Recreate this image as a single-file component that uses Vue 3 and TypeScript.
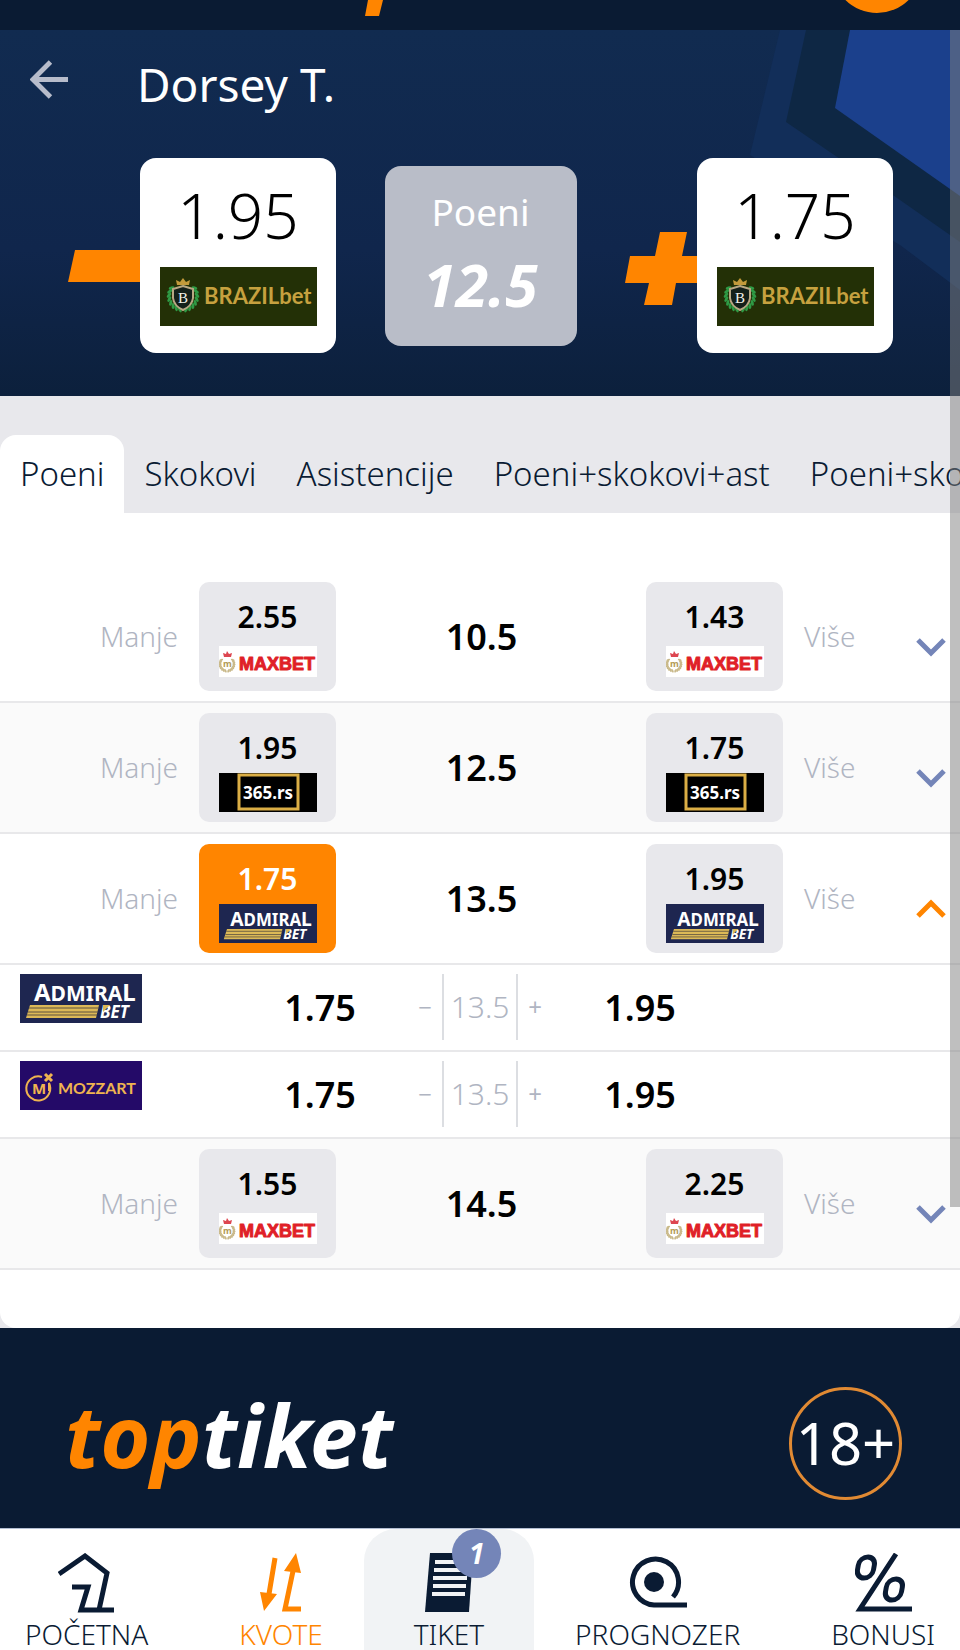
<script setup lang="ts">
import { h, ref } from 'vue'
import type { FunctionalComponent } from 'vue'

type Brand = 'brazilbet' | 'maxbet' | '365' | 'admiral' | 'mozzart'

interface Offer {
  brand: Brand
  under: string
  over: string
}

interface Line {
  value: string
  under: string
  over: string
  brand: Brand
  picked?: 'under' | 'over'
  offers: Offer[]
}

const family = "'Noto Sans', sans-serif"

const label = (x: number, y: number, size: number, fill: string, text: string, extra = {}) =>
  h('text', { x, y, fill, 'font-size': size, 'font-family': family, 'font-weight': 700, ...extra }, text)

function laurel(cx: number, cy: number, rx: number, ry: number, fill: string, leaf: number) {
  const leaves = []
  for (const side of [-1, 1]) {
    for (let i = 0; i < 8; i++) {
      const a = ((-35 + i * 16) * Math.PI) / 180
      const x = cx + side * Math.cos(a) * rx
      const y = cy + Math.sin(a) * ry
      leaves.push(
        h('ellipse', {
          cx: x, cy: y, rx: leaf, ry: leaf / 2, fill,
          transform: `rotate(${side * (20 + i * 14)} ${x} ${y})`,
        }),
      )
    }
  }
  return leaves
}

const BrandLogo: FunctionalComponent<{ brand: Brand }> = ({ brand }) => {
  const svg = (w: number, hh: number, name: string, children: ReturnType<typeof h>[]) =>
    h('svg', { viewBox: `0 0 ${w} ${hh}`, role: 'img', 'aria-label': name }, children)

  if (brand === 'brazilbet') {
    return svg(157, 59, 'BRAZILbet', [
      h('rect', { width: 157, height: 59, fill: '#233006' }),
      ...laurel(23, 29, 14, 14, '#2f9a45', 3),
      h('path', { d: 'M23 19 L33 22 V31 Q32 39 23 43 Q14 39 13 31 V22 Z', fill: '#14201a', stroke: '#b9a884', 'stroke-width': 2 }),
      h('path', { d: 'M17 18 L16 13 L20 15 L23 11 L26 15 L30 13 L29 18 Z', fill: '#c39a3b' }),
      h('text', { x: 18, y: 36, fill: '#f2f2ea', 'font-size': 15, 'font-family': "'Liberation Serif', serif" }, 'B'),
      label(44, 37, 22, '#c6a13f', 'BRAZILbet', { 'font-family': 'Lato, sans-serif', 'font-weight': 700 }),
    ])
  }
  if (brand === 'maxbet') {
    return svg(98, 31, 'MaxBet', [
      h('rect', { width: 98, height: 31, fill: '#fff' }),
      ...laurel(8, 18, 7, 7, '#c9b98a', 2),
      h('path', { d: 'M5 11 L4 7 L7 8 L8 5 L10 8 L13 7 L12 11 Z', fill: '#dd4650' }),
      label(4, 21, 9, '#b39b55', 'm'),
      label(20, 24, 18, '#e01f28', 'MAXBET', {
        'font-family': "'Liberation Sans', sans-serif",
        stroke: '#e01f28', 'stroke-width': 1, 'stroke-linejoin': 'round',
      }),
    ])
  }
  if (brand === '365') {
    return svg(98, 39, '365.rs', [
      h('rect', { width: 98, height: 39, fill: '#000' }),
      h('rect', { x: 20, y: 2, width: 59, height: 34, fill: 'none', stroke: '#dbae45', 'stroke-width': 3 }),
      label(49, 26, 17, '#fff', '365.rs', { 'text-anchor': 'middle' }),
    ])
  }
  if (brand === 'admiral') {
    return svg(122, 49, 'Admiral Bet', [
      h('rect', { width: 122, height: 49, fill: '#1e2650' }),
      h('text', { x: 14, y: 27, fill: '#fff', 'font-family': family, 'font-weight': 700, 'font-size': 21 }, [
        h('tspan', { 'font-size': 24 }, 'A'),
        'DMIRA',
        h('tspan', { 'font-size': 24 }, 'L'),
      ]),
      h('path', { d: 'M10 31 H79 L76 44 H6 Z', fill: '#dcb957' }),
      h('path', { d: 'M9 34 H79 M8 38 H78 M7 41 H77', stroke: '#5d5040', 'stroke-width': 1 }),
      label(80, 44, 17, '#fff', 'BET', { 'font-style': 'italic' }),
      h('path', { d: 'M83 31 L90 31 L83 38 Z', fill: '#dcb957' }),
    ])
  }
  return svg(122, 49, 'Mozzart', [
    h('rect', { width: 122, height: 49, fill: '#240a68' }),
    h('path', { d: 'M22 16 A12 12 0 1 0 29 22 V30', fill: 'none', stroke: '#efb450', 'stroke-width': 2 }),
    h('path', { d: 'M25 13 L32 20 M32 13 L25 20', stroke: '#efb450', 'stroke-width': 3 }),
    label(12, 33, 15, '#efb450', 'M'),
    label(38, 33, 16, '#efb450', 'MOZZART', { 'font-family': 'Lato, sans-serif' }),
  ])
}
BrandLogo.props = ['brand']

const tabs = ['Poeni', 'Skokovi', 'Asistencije', 'Poeni+skokovi+ast', 'Poeni+skokovi']
const activeTab = ref(0)

const lines: Line[] = [
  { value: '10.5', under: '2.55', over: '1.43', brand: 'maxbet', offers: [] },
  { value: '12.5', under: '1.95', over: '1.75', brand: '365', offers: [] },
  {
    value: '13.5', under: '1.75', over: '1.95', brand: 'admiral', picked: 'under',
    offers: [
      { brand: 'admiral', under: '1.75', over: '1.95' },
      { brand: 'mozzart', under: '1.75', over: '1.95' },
    ],
  },
  { value: '14.5', under: '1.55', over: '2.25', brand: 'maxbet', offers: [] },
]
const open = ref<string | null>('13.5')
const toggle = (value: string) => {
  open.value = open.value === value ? null : value
}
</script>

<template>
  <div class="page">
    <header class="topbar">
      <svg class="topbar-art" viewBox="0 0 960 30" aria-hidden="true">
        <path d="M368 0 H383 L379 16 H365 Z" fill="#ff8500" />
        <circle cx="877" cy="-32" r="45" fill="#ff8500" />
      </svg>
    </header>

    <section class="hero">
      <svg class="hero-art" viewBox="0 0 210 366" aria-hidden="true">
        <path d="M30 0 H210 V260 L150 215 L0 125 Z" fill="#122e59" />
        <path d="M56 0 H210 V212 L150 170 L36 92 Z" fill="#0e2744" />
        <path d="M100 0 H210 V166 L85 78 Z" fill="#1b408c" />
      </svg>
      <div class="title-row">
        <button class="back" type="button" aria-label="Nazad">
          <svg viewBox="0 0 40 40"><path d="M39 20 H3 M21 2 L3 20 L21 38" fill="none" stroke="#b7bccb" stroke-width="5" /></svg>
        </button>
        <h1>Dorsey T.</h1>
      </div>
      <div class="best">
        <div class="best-side">
          <svg class="sign" viewBox="0 0 72 74" aria-hidden="true"><path d="M7 18 H72 V50 H0 Z" fill="#ff8500" /></svg>
          <button class="best-card" type="button"><span>1.95</span><BrandLogo brand="brazilbet" /></button>
        </div>
        <div class="best-mid"><span>Poeni</span><strong>12.5</strong></div>
        <div class="best-side">
          <svg class="sign" viewBox="0 0 72 74" aria-hidden="true"><path d="M35 0 H62 L57 24 H72 V51 H51 L47 73 H19 L24 51 H0 L5 24 H30 Z" fill="#ff8500" /></svg>
          <button class="best-card" type="button"><span>1.75</span><BrandLogo brand="brazilbet" /></button>
        </div>
      </div>
    </section>

    <nav class="tabs" aria-label="Tržišta">
      <button
        v-for="(tab, i) in tabs" :key="tab" type="button"
        :class="['tab', { active: i === activeTab }]" @click="activeTab = i"
      >{{ tab }}</button>
    </nav>

    <main class="sheet">
      <div class="panel">
        <template v-for="(line, i) in lines" :key="line.value">
          <div :class="['line', { alt: i % 2 === 1 }]">
            <div class="side under">
              <span class="hint">Manje</span>
              <button type="button" :class="['odd', { picked: line.picked === 'under' }]">
                <span>{{ line.under }}</span>
                <span class="odd-logo"><BrandLogo :brand="line.brand" /></span>
              </button>
            </div>
            <strong class="value">{{ line.value }}</strong>
            <div class="side over">
              <button type="button" :class="['odd', { picked: line.picked === 'over' }]">
                <span>{{ line.over }}</span>
                <span class="odd-logo"><BrandLogo :brand="line.brand" /></span>
              </button>
              <span class="hint">Više</span>
              <button
                type="button" class="expand" :aria-expanded="open === line.value"
                aria-label="Sve kvote" @click="toggle(line.value)"
              >
                <svg viewBox="0 0 30 20">
                  <path v-if="open === line.value" d="M2 17 L15 4 L28 17" fill="none" stroke="#ff8500" stroke-width="5" />
                  <path v-else d="M2 3 L15 16 L28 3" fill="none" stroke="#7485b8" stroke-width="5" />
                </svg>
              </button>
            </div>
          </div>
          <template v-if="open === line.value">
            <div v-for="offer in line.offers" :key="offer.brand" class="offer">
              <span class="offer-logo"><BrandLogo :brand="offer.brand" /></span>
              <strong class="value">{{ offer.under }}</strong>
              <div class="stepper">
                <button type="button">−</button>
                <span>{{ line.value }}</span>
                <button type="button">+</button>
              </div>
              <strong class="value">{{ offer.over }}</strong>
            </div>
          </template>
        </template>
      </div>
    </main>

    <footer class="footer">
      <a class="logo" href="#"><span>top</span>tiket</a>
      <span class="age">18+</span>
    </footer>

    <nav class="bottom" aria-label="Glavni meni">
      <a class="item" href="#">
        <svg width="57" height="60" viewBox="0 0 57 60"><path d="M1 21 L27 3 L49 20 L41 57 M14 34 H30 L23 57 H56" fill="none" stroke="#0a1b33" stroke-width="5" /></svg>
        POČETNA
      </a>
      <a class="item current" href="#">
        <svg width="42" height="60" viewBox="0 0 42 60">
          <path d="M15 5 L9 41 M33 18 L25 56 H41" fill="none" stroke="#ff8500" stroke-width="5" />
          <path d="M0 39 L17 41 L4 58 Z M36 0 L41 20 L24 18 Z" fill="#ff8500" />
        </svg>
        KVOTE
      </a>
      <a class="item ticket" href="#">
        <svg width="48" height="60" viewBox="0 0 48 60">
          <path d="M5 0 H48 L44 59 H0 Z" fill="#0a1b33" />
          <path d="M10 9 H43 M9 17 H42 M8 25 H42 M8 33 H41 M7 41 H40" stroke="#f1f3f5" stroke-width="4" />
        </svg>
        TIKET
        <span class="badge">1</span>
      </a>
      <a class="item" href="#">
        <svg width="59" height="60" viewBox="0 0 59 60">
          <path d="M45 44 A23 23 0 1 0 26 52 H59" fill="none" stroke="#0a1b33" stroke-width="5" />
          <circle cx="26" cy="29" r="10" fill="#0a1b33" />
        </svg>
        PROGNOZER
      </a>
      <a class="item" href="#">
        <svg width="57" height="60" viewBox="0 0 57 60">
          <g fill="none" stroke="#0a1b33" stroke-width="5">
            <rect x="-8" y="-10" width="16" height="21" rx="8" transform="translate(11 14) skewX(-10)" />
            <rect x="-8" y="-10" width="16" height="21" rx="8" transform="translate(39 36) skewX(-10)" />
            <path d="M41 1 L5 56 H57" />
          </g>
        </svg>
        BONUSI
      </a>
    </nav>
    <div class="scrollbar"></div>
  </div>
</template>

<style>
html,
body {
  margin: 0;
  background: #e8e8ec;
}
</style>

<style scoped>
.page {
  position: relative;
  overflow: hidden;
  font-family: 'Noto Sans', 'Open Sans', sans-serif;
  color: #000;
}

button {
  margin: 0;
  padding: 0;
  border: 0;
  background: none;
  font: inherit;
  color: inherit;
  cursor: pointer;
}

a {
  text-decoration: none;
  color: inherit;
}

svg {
  display: block;
}

.topbar {
  height: 30px;
  background: #0a1b33;
}

.topbar-art {
  width: 100%;
  height: 30px;
}

.hero {
  position: relative;
  box-sizing: border-box;
  height: 366px;
  padding: 24px 67px 0 68px;
  background: linear-gradient(#112b50, #10264c 60%, #0c203c);
}

.hero-art {
  position: absolute;
  top: 0;
  right: 0;
  height: 100%;
}

.title-row {
  position: relative;
  display: flex;
  align-items: flex-start;
  gap: 68px;
  margin-left: -38px;
  height: 60px;
}

.back {
  width: 39px;
  padding-top: 6px;
}

h1 {
  margin: 0;
  font-size: 46px;
  font-weight: 400;
  line-height: 60px;
  color: #fff;
}

.best {
  position: relative;
  display: flex;
  justify-content: space-between;
  align-items: center;
  margin-top: 44px;
}

.best-side {
  display: flex;
  align-items: center;
}

.sign {
  width: 72px;
  padding-top: 26px;
}

.best-card {
  display: flex;
  flex-direction: column;
  align-items: center;
  gap: 12px;
  box-sizing: border-box;
  width: 196px;
  height: 195px;
  padding: 17px 20px 0;
  border-radius: 16px;
  background: #fff;
  font-size: 62px;
  font-weight: 300;
  line-height: 80px;
}

.best-card svg {
  width: 157px;
}

.best-mid {
  display: flex;
  flex-direction: column;
  align-items: center;
  box-sizing: border-box;
  width: 192px;
  height: 180px;
  padding-top: 18px;
  border-radius: 16px;
  background: #b9bdc8;
  color: #fff;
  font-size: 37px;
  line-height: 56px;
}

.best-mid strong {
  font-size: 59px;
  font-style: italic;
  line-height: 88px;
}

.tabs {
  display: flex;
  overflow: hidden;
  padding-top: 39px;
  background: #e8e8ec;
}

.tab {
  flex: none;
  padding: 0 20px;
  border-radius: 16px 16px 0 0;
  color: #0a1b33;
  font-size: 33px;
  font-weight: 300;
  line-height: 78px;
}

.tab.active {
  background: #fff;
}

.sheet {
  background: #e8e8ec;
}

.panel {
  padding: 59px 0 58px;
  border-radius: 0 0 16px 16px;
  background: #fff;
}

.line {
  display: grid;
  grid-template-columns: 336fr 310fr 314fr;
  align-items: center;
  box-sizing: border-box;
  height: 131px;
  border-bottom: 2px solid #e8e8ea;
}

.line.alt {
  background: #fafafa;
}

.side {
  display: flex;
  align-items: center;
  gap: 21px;
}

.under {
  justify-content: flex-end;
}

.hint {
  padding-bottom: 2px;
  color: #b0b5c2;
  font-size: 28px;
  font-weight: 300;
}

.odd {
  display: flex;
  flex-direction: column;
  align-items: center;
  box-sizing: border-box;
  width: 137px;
  height: 109px;
  padding-top: 12px;
  border-radius: 10px;
  background: #e8e8ec;
  font-size: 30px;
  font-weight: 600;
  line-height: 46px;
}

.odd.picked {
  background: #ff8500;
  color: #fff;
}

.odd-logo {
  display: flex;
  align-items: center;
  width: 98px;
  height: 43px;
}

.odd-logo svg {
  width: 100%;
}

.value {
  font-size: 36px;
  font-weight: 600;
  line-height: 48px;
  text-align: center;
}

.line .value {
  padding-right: 19px;
}

.expand {
  width: 30px;
  margin-left: auto;
  padding: 20px 14px 0 0;
  box-sizing: content-box;
}

.offer {
  display: grid;
  grid-template-columns: 3fr 2fr 2fr 5fr;
  align-items: start;
  box-sizing: border-box;
  height: 87px;
  padding: 9px 0 10px;
  border-bottom: 2px solid #e8e8ea;
}

.offer .value {
  line-height: 68px;
}

.offer .value:last-child {
  padding-right: 60%;
}

.offer-logo {
  width: 122px;
  margin-left: 20px;
}

.stepper {
  display: flex;
  justify-content: center;
  color: #b0b5c2;
  font-size: 30px;
  font-weight: 300;
  line-height: 66px;
}

.stepper button {
  width: 34px;
  font-size: 24px;
  font-weight: 400;
}

.stepper span {
  width: 72px;
  border: solid #dcdee2;
  border-width: 0 2px;
  text-align: center;
}

.footer {
  display: flex;
  align-items: center;
  justify-content: space-between;
  box-sizing: border-box;
  height: 200px;
  padding: 30px 58px 0 65px;
  background: #0a1b33;
  color: #fff;
}

.logo {
  margin-bottom: 16px;
  font-size: 86px;
  font-style: italic;
  font-weight: 700;
  line-height: 112px;
}

.logo span {
  color: #ff8500;
}

.age {
  box-sizing: border-box;
  width: 113px;
  height: 113px;
  border: 3px solid #e18a33;
  border-radius: 50%;
  font-size: 58px;
  font-weight: 400;
  line-height: 106px;
  text-align: center;
}

.bottom {
  display: flex;
  justify-content: space-between;
  box-sizing: border-box;
  height: 122px;
  padding: 0 25px;
  border-top: 1px solid #b3bed2;
  background: #fff;
  color: #0a1b33;
}

.item {
  display: flex;
  flex-direction: column;
  align-items: center;
  padding-top: 24px;
  font-size: 28px;
  font-weight: 300;
  line-height: 42px;
}

.item svg {
  flex: none;
}

.current {
  color: #ff8500;
}

.ticket {
  position: relative;
  margin: 0 -50px;
  padding: 24px 50px 0;
  border-radius: 32px 32px 0 0;
  background: #f1f3f5;
}

.badge {
  position: absolute;
  top: 0;
  right: 33px;
  width: 49px;
  height: 49px;
  border-radius: 50%;
  background: #7485b8;
  color: #fff;
  font-size: 28px;
  font-style: italic;
  font-weight: 700;
  line-height: 49px;
  text-align: center;
}

.scrollbar {
  position: absolute;
  top: 30px;
  right: 0;
  width: 10px;
  height: 1177px;
  background: rgba(128, 128, 128, 0.5);
}
</style>
